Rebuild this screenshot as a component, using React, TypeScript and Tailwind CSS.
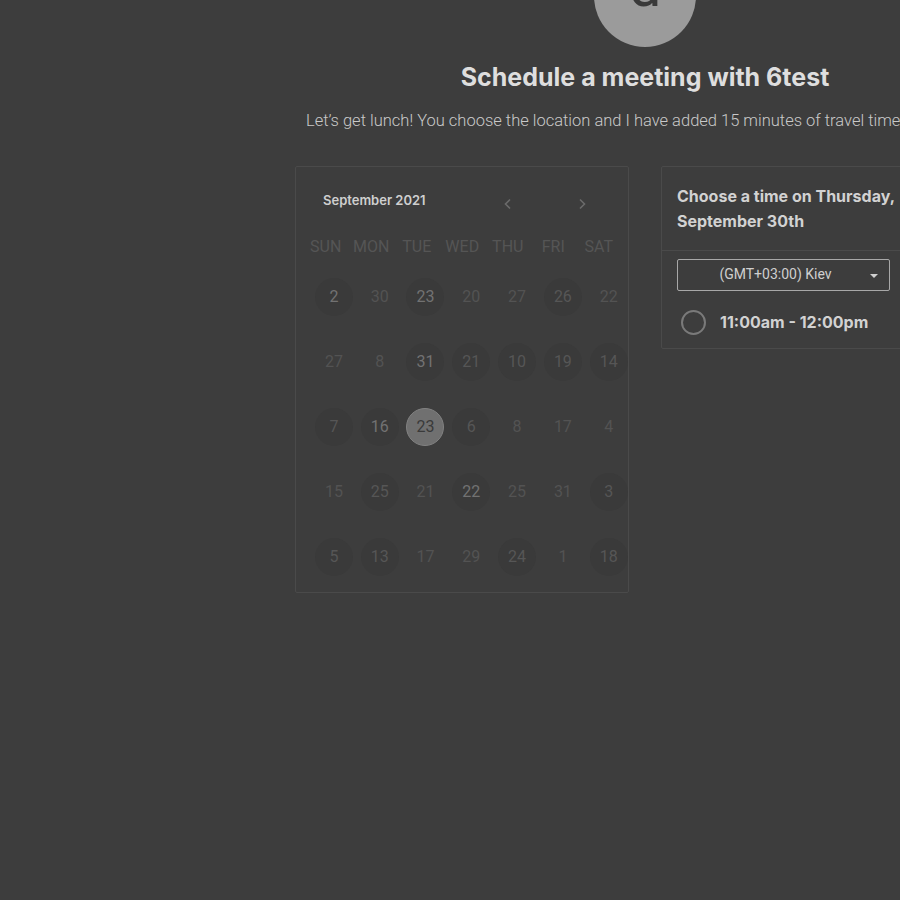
const weekdays = ["SUN", "MON", "TUE", "WED", "THU", "FRI", "SAT"];

// p = plain, c = dark circle, l = circle with lighter text, s = selected
const rows: [string, string][][] = [
  [["2", "l"], ["30", "p"], ["23", "l"], ["20", "p"], ["27", "p"], ["26", "c"], ["22", "p"]],
  [["27", "p"], ["8", "p"], ["31", "l"], ["21", "c"], ["10", "c"], ["19", "c"], ["14", "c"]],
  [["7", "c"], ["16", "l"], ["23", "s"], ["6", "c"], ["8", "p"], ["17", "p"], ["4", "p"]],
  [["15", "p"], ["25", "c"], ["21", "p"], ["22", "l"], ["25", "p"], ["31", "p"], ["3", "c"]],
  [["5", "c"], ["13", "c"], ["17", "p"], ["29", "p"], ["24", "c"], ["1", "p"], ["18", "c"]],
];

function Day({ n, kind }: { n: string; kind: string }) {
  let cls = "text-[#535353]";
  if (kind === "c") cls = "bg-[#3a3a3a] text-[#565656]";
  if (kind === "l") cls = "bg-[#3a3a3a] text-[#727272]";
  if (kind === "s") cls = "bg-[#707070] text-[#3a3a3a] border border-[#828282]";
  return (
    <div className="flex h-[65px] items-center justify-center">
      <div className={`flex h-[38px] w-[38px] items-center justify-center rounded-full text-[16px] ${cls}`}>
        {n}
      </div>
    </div>
  );
}

export default function App() {
  return (
    <main className="h-[900px] w-[900px] overflow-hidden bg-[#3d3d3d] text-[#d6d6d6]">
      <div className="flex w-[1290px] flex-col items-center">
        <div className="-mt-[55px] flex h-[102px] w-[102px] items-start justify-center rounded-full bg-[#9b9b9b]">
          <span className="mt-[12px] text-[58px] leading-none text-[#3a3a3a] font-['Roboto',sans-serif]">d</span>
        </div>

        <h1 className="mt-[16px] text-[25px] font-bold leading-[28px] text-[#dedede] font-['Inter',sans-serif]">
          Schedule a meeting with 6test
        </h1>

        <p className="mt-[18px] w-[678px] whitespace-nowrap text-left text-[16.5px] font-light text-[#c9c9c9] font-['Roboto',sans-serif]">
          Let’s get lunch! You choose the location and I have added 15 minutes of travel time
        </p>

        <div className="mt-[32px] flex w-[700px] items-start gap-[32px]">
          <section className="h-[427px] w-[334px] shrink-0 rounded-[2px] border border-[#4a4a4a] font-['Roboto',sans-serif]">
            <div className="flex h-[65px] items-center pl-[27px] pt-[2px]">
              <span className="w-[160px] text-[13px] font-semibold text-[#cfcfcf] font-['Inter',sans-serif]">
                September 2021
              </span>
              <div className="ml-[18px] flex items-center gap-[60px] pt-[8px] text-[#6a6a6a]">
                <svg width="14" height="14" viewBox="0 0 14 14" fill="none" stroke="currentColor" strokeWidth="1.6">
                  <path d="M9 2.5 4.5 7 9 11.5" />
                </svg>
                <svg width="14" height="14" viewBox="0 0 14 14" fill="none" stroke="currentColor" strokeWidth="1.6">
                  <path d="M5 2.5 9.5 7 5 11.5" />
                </svg>
              </div>
            </div>
            <div className="grid grid-cols-[repeat(7,45.5px)] pl-[7px] text-[16px] text-[#555555]">
              {weekdays.map((w) => (
                <div key={w} className="flex h-[30px] items-center justify-center">
                  {w}
                </div>
              ))}
            </div>
            <div className="mt-[3px] grid grid-cols-[repeat(7,45.8px)] pl-[15px]">
              {rows.flat().map(([n, k], i) => (
                <Day key={i} n={n} kind={k} />
              ))}
            </div>
          </section>

          <section className="w-[260px] shrink-0 rounded-[2px] border border-[#4a4a4a] font-['Inter',sans-serif]">
            <div className="border-b border-[#4a4a4a] px-[15px] pb-[16px] pt-[17px] text-[16px] font-bold leading-[25px] text-[#d2d2d2]">
              Choose a time on Thursday, September 30th
            </div>
            <div className="px-[15px] pb-[13px] pt-[8px]">
              <div className="relative flex h-[32px] w-[213px] items-center justify-center rounded-[2px] border border-[#a8a8a8] text-[14px] text-[#cfcfcf] font-['Roboto',sans-serif]">
                <span className="-ml-[16px]">(GMT+03:00) Kiev</span>
                <span className="absolute right-[11px] top-[14px] h-0 w-0 border-x-[4px] border-t-[4px] border-x-transparent border-t-[#d0d0d0]" />
              </div>
              <div className="mt-[19px] flex items-center">
                <div className="ml-[4px] h-[25px] w-[25px] rounded-full border-2 border-[#7a7a7a]" />
                <span className="ml-[14px] text-[16px] font-bold text-[#d2d2d2]">11:00am - 12:00pm</span>
              </div>
            </div>
          </section>
        </div>
      </div>
    </main>
  );
}
